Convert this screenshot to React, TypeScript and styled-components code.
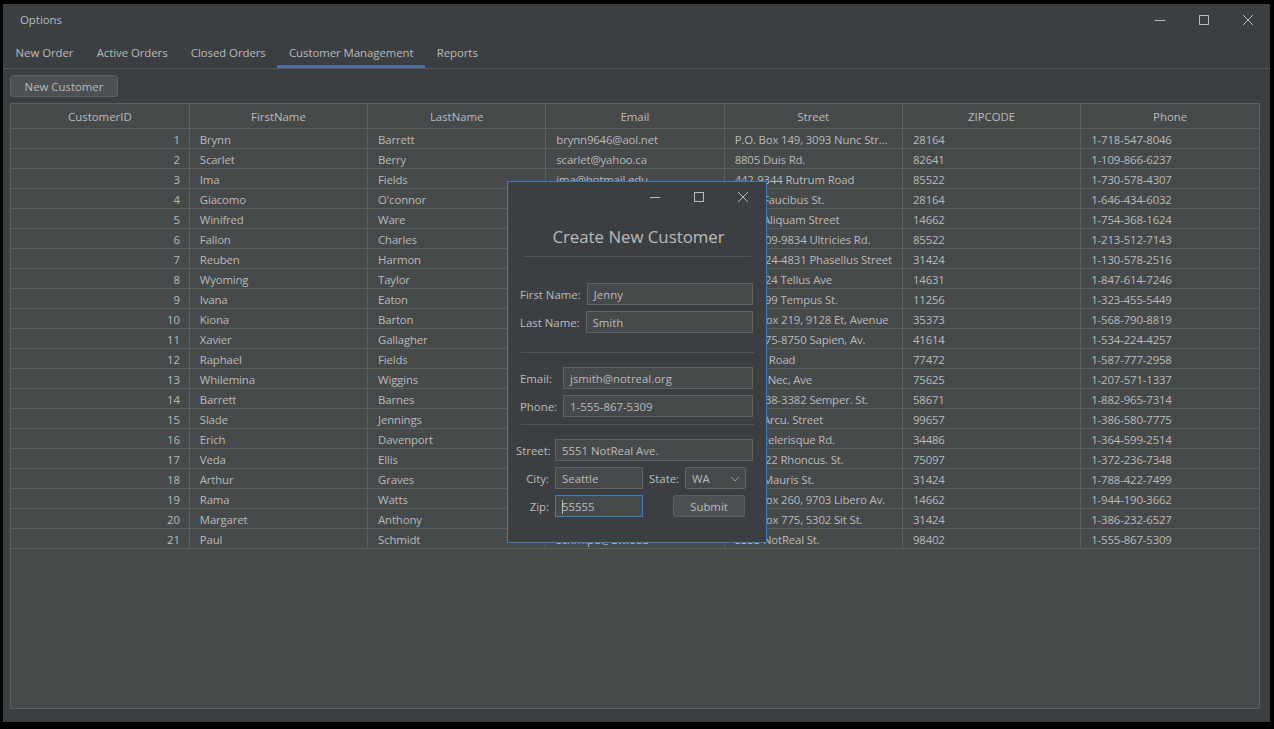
import React from "react";
import styled, { createGlobalStyle } from "styled-components";

const GlobalStyle = createGlobalStyle`
  html, body {
    margin: 0;
    padding: 0;
    background: #000;
  }
  body {
    font-family: "Open Sans", "Noto Sans", sans-serif;
    font-size: 11.4px;
    color: #bbbbbb;
  }
`;

const Screen = styled.div`
  width: 1274px;
  height: 729px;
  box-sizing: border-box;
  padding: 4px 4px 7px 3px;
  background: #000;
`;

const Window = styled.div`
  position: relative;
  height: 100%;
  background: #3c3f41;
  display: flex;
  flex-direction: column;
  overflow: hidden;
`;

const TitleBar = styled.div`
  height: 31px;
  display: flex;
  align-items: center;
  padding-left: 17px;
  flex-shrink: 0;
`;

const TitleText = styled.div`
  flex: 1;
`;

const Controls = styled.div`
  display: flex;
  align-self: stretch;
`;

const ControlButton = styled.div`
  width: 44px;
  display: flex;
  align-items: center;
  justify-content: center;
`;

const Tabs = styled.div`
  display: flex;
  height: 33px;
  padding-left: 1px;
  border-bottom: 1px solid #555759;
  flex-shrink: 0;
`;

const Tab = styled.div<{ $active?: boolean }>`
  padding: 4px 11.6px 0;
  display: flex;
  align-items: center;
  box-sizing: border-box;
  border-bottom: 3px solid ${(p) => (p.$active ? "#4a6ea8" : "transparent")};
  color: #bbbbbb;
  letter-spacing: -0.05px;
`;

const Toolbar = styled.div`
  padding: 6px 0 0 7px;
  display: flex;
`;

const Button = styled.div<{ $width: number }>`
  width: ${(p) => p.$width}px;
  flex-shrink: 0;
  height: 22px;
  box-sizing: border-box;
  background: #4c5052;
  border: 1px solid #5e6060;
  border-radius: 3px;
  display: flex;
  align-items: center;
  justify-content: center;
  color: #bbbbbb;
  padding-top: 1px;
`;

const TableArea = styled.div`
  flex: 1;
  margin: 6px 10px 13px 7px;
  background: #45494a;
  border: 1px solid #5e6060;
  overflow: hidden;
`;

const Grid = styled.table`
  width: 100%;
  border-collapse: collapse;
  table-layout: fixed;
`;

const HeadCell = styled.th`
  height: 23px;
  padding: 1px 0 0;
  font-weight: normal;
  text-align: center;
  border-right: 1px solid #5e6060;
  border-bottom: 1px solid #5e6060;
  color: #bbbbbb;
  &:last-child {
    border-right: none;
  }
`;

const Cell = styled.td<{ $right?: boolean }>`
  height: 17px;
  padding: 2px ${(p) => (p.$right ? "9px" : "10px")} 0;
  text-align: ${(p) => (p.$right ? "right" : "left")};
  border-right: 1px solid #5e6060;
  border-bottom: 1px solid #5e6060;
  white-space: nowrap;
  overflow: hidden;
  text-overflow: ellipsis;
  line-height: 17px;
  letter-spacing: -0.15px;
  &:last-child {
    border-right: none;
  }
`;

const Dialog = styled.div`
  position: absolute;
  left: 504px;
  top: 177px;
  width: 260px;
  height: 362px;
  box-sizing: border-box;
  border: 1px solid #3a7dc9;
  background: #3c3f41;
  display: flex;
  flex-direction: column;
`;

const DialogTitleBar = styled.div`
  height: 29px;
  display: flex;
  justify-content: flex-end;
  padding-right: 1px;
`;

const Heading = styled.div`
  text-align: center;
  font-size: 16.8px;
  color: #bbbbbb;
  margin-top: 12px;
  height: 28px;
  line-height: 28px;
  padding-left: 3px;
`;

const Separator = styled.div<{ $inset: number; $top?: number }>`
  height: 1px;
  background: #555759;
  margin: ${(p) => p.$top ?? 0}px ${(p) => p.$inset - 1}px 0 ${(p) => p.$inset}px;
`;

const Section = styled.div<{ $top: number; $bottom: number; $left?: number }>`
  display: flex;
  flex-direction: column;
  gap: 6px;
  padding: ${(p) => p.$top}px 13px ${(p) => p.$bottom}px ${(p) => p.$left ?? 12}px;
`;

const Row = styled.div`
  display: flex;
  align-items: center;
  gap: 6px;
`;

const Label = styled.div<{ $width?: number; $left?: boolean }>`
  width: ${(p) => (p.$width ? `${p.$width}px` : "auto")};
  text-align: ${(p) => (p.$left ? "left" : "right")};
  flex-shrink: 0;
  white-space: nowrap;
`;

const Field = styled.div<{ $width?: number; $focused?: boolean }>`
  ${(p) => (p.$width ? `width: ${p.$width}px; flex-shrink: 0;` : "flex: 1;")}
  height: 22px;
  box-sizing: border-box;
  background: #45494a;
  border: 1px solid ${(p) => (p.$focused ? "#3a7dc9" : "#646464")};
  padding: 1px 6px 0;
  display: flex;
  align-items: center;
  color: #bbbbbb;
  white-space: nowrap;
`;

const Caret = styled.span`
  display: inline-block;
  width: 1px;
  height: 14px;
  background: #bbbbbb;
  margin-right: -1px;
`;

const Select = styled(Field)`
  justify-content: space-between;
  padding-right: 5px;
  border-radius: 2px;
`;

const Spacer = styled.div<{ $width: number }>`
  width: ${(p) => p.$width}px;
  flex-shrink: 0;
`;

const MinIcon = () => (
  <svg width="12" height="12" viewBox="0 0 12 12">
    <path d="M1 6.5h10" stroke="#bbbbbb" strokeWidth="1" fill="none" />
  </svg>
);

const MaxIcon = () => (
  <svg width="12" height="12" viewBox="0 0 12 12">
    <rect x="1.5" y="1.5" width="9" height="9" stroke="#bbbbbb" strokeWidth="1" fill="none" />
  </svg>
);

const CloseIcon = () => (
  <svg width="12" height="12" viewBox="0 0 12 12">
    <path d="M1 1l10 10M11 1L1 11" stroke="#bbbbbb" strokeWidth="1" fill="none" />
  </svg>
);

const Chevron = () => (
  <svg width="10" height="6" viewBox="0 0 10 6">
    <path d="M1 1l4 4 4-4" stroke="#9a9a9a" strokeWidth="1" fill="none" />
  </svg>
);

const columns = ["CustomerID", "FirstName", "LastName", "Email", "Street", "ZIPCODE", "Phone"];

const customers: [string, string, string, string, string, string][] = [
  ["Brynn", "Barrett", "brynn9646@aol.net", "P.O. Box 149, 3093 Nunc Street", "28164", "1-718-547-8046"],
  ["Scarlet", "Berry", "scarlet@yahoo.ca", "8805 Duis Rd.", "82641", "1-109-866-6237"],
  ["Ima", "Fields", "ima@hotmail.edu", "442-9344 Rutrum Road", "85522", "1-730-578-4307"],
  ["Giacomo", "O'connor", "giacomo@gmail.com", "8562 Faucibus St.", "28164", "1-646-434-6032"],
  ["Winifred", "Ware", "winnie@icloud.com", "7532 Aliquam Street", "14662", "1-754-368-1624"],
  ["Fallon", "Charles", "fcharles@aol.com", "Ap #109-9834 Ultricies Rd.", "85522", "1-213-512-7143"],
  ["Reuben", "Harmon", "rharmon@yahoo.com", "Ap #724-4831 Phasellus Street", "31424", "1-130-578-2516"],
  ["Wyoming", "Taylor", "wtaylor@gmail.com", "Ap #124 Tellus Ave", "14631", "1-847-614-7246"],
  ["Ivana", "Eaton", "ieaton@outlook.com", "Ap #899 Tempus St.", "11256", "1-323-455-5449"],
  ["Kiona", "Barton", "kbarton@aol.net", "P.O. Box 219, 9128 Et, Avenue", "35373", "1-568-790-8819"],
  ["Xavier", "Gallagher", "xgal@hotmail.com", "Ap #275-8750 Sapien, Av.", "41614", "1-534-224-4257"],
  ["Raphael", "Fields", "rfields@yahoo.ca", "6 Velit Road", "77472", "1-587-777-2958"],
  ["Whilemina", "Wiggins", "wwiggins@gmail.com", "Ap #3 Nec, Ave", "75625", "1-207-571-1337"],
  ["Barrett", "Barnes", "bbarnes@aol.com", "Ap #738-3382 Semper. St.", "58671", "1-882-965-7314"],
  ["Slade", "Jennings", "sjennings@uw.edu", "5742 Arcu. Street", "99657", "1-386-580-7775"],
  ["Erich", "Davenport", "erichd@gmail.com", "611 Scelerisque Rd.", "34486", "1-364-599-2514"],
  ["Veda", "Ellis", "vellis@yahoo.com", "Ap #622 Rhoncus. St.", "75097", "1-372-236-7348"],
  ["Arthur", "Graves", "agraves@aol.net", "7540 Mauris St.", "31424", "1-788-422-7499"],
  ["Rama", "Watts", "rwatts@outlook.com", "P.O. Box 260, 9703 Libero Av.", "14662", "1-944-190-3662"],
  ["Margaret", "Anthony", "manthony@gmail.com", "P.O. Box 775, 5302 Sit St.", "31424", "1-386-232-6527"],
  ["Paul", "Schmidt", "schmipd@uw.edu", "5555 NotReal St.", "98402", "1-555-867-5309"],
];

export default function App() {
  return (
    <>
      <GlobalStyle />
      <Screen>
        <Window>
          <TitleBar>
            <TitleText>Options</TitleText>
            <Controls>
              <ControlButton>
                <MinIcon />
              </ControlButton>
              <ControlButton>
                <MaxIcon />
              </ControlButton>
              <ControlButton>
                <CloseIcon />
              </ControlButton>
            </Controls>
          </TitleBar>

          <Tabs>
            <Tab>New Order</Tab>
            <Tab>Active Orders</Tab>
            <Tab>Closed Orders</Tab>
            <Tab $active>Customer Management</Tab>
            <Tab>Reports</Tab>
          </Tabs>

          <Toolbar>
            <Button $width={108}>New Customer</Button>
          </Toolbar>

          <TableArea>
            <Grid>
              <thead>
                <tr>
                  {columns.map((c) => (
                    <HeadCell key={c}>{c}</HeadCell>
                  ))}
                </tr>
              </thead>
              <tbody>
                {customers.map((c, i) => (
                  <tr key={i}>
                    <Cell $right>{i + 1}</Cell>
                    {c.map((v, j) => (
                      <Cell key={j}>{v}</Cell>
                    ))}
                  </tr>
                ))}
              </tbody>
            </Grid>
          </TableArea>

          <Dialog>
            <DialogTitleBar>
              <ControlButton>
                <MinIcon />
              </ControlButton>
              <ControlButton>
                <MaxIcon />
              </ControlButton>
              <ControlButton>
                <CloseIcon />
              </ControlButton>
            </DialogTitleBar>
            <Heading>Create New Customer</Heading>
            <Separator $inset={16} $top={5} />

            <Section $top={26} $bottom={19}>
              <Row>
                <Label>First Name:</Label>
                <Field>Jenny</Field>
              </Row>
              <Row>
                <Label>Last Name:</Label>
                <Field>Smith</Field>
              </Row>
            </Section>
            <Separator $inset={13} />

            <Section $top={14} $bottom={7}>
              <Row>
                <Label $width={37} $left>Email:</Label>
                <Field>jsmith@notreal.org</Field>
              </Row>
              <Row>
                <Label $width={37} $left>Phone:</Label>
                <Field>1-555-867-5309</Field>
              </Row>
            </Section>
            <Separator $inset={13} />

            <Section $top={14} $bottom={0} $left={8}>
              <Row>
                <Label $width={33}>Street:</Label>
                <Field>5551 NotReal Ave.</Field>
              </Row>
              <Row>
                <Label $width={33}>City:</Label>
                <Field $width={88}>Seattle</Field>
                <Label>State:</Label>
                <Select $width={61}>
                  <span>WA</span>
                  <Chevron />
                </Select>
              </Row>
              <Row>
                <Label $width={33}>Zip:</Label>
                <Field $width={88} $focused>
                  <Caret />
                  55555
                </Field>
                <Spacer $width={18} />
                <Button $width={72}>Submit</Button>
              </Row>
            </Section>
          </Dialog>
        </Window>
      </Screen>
    </>
  );
}
